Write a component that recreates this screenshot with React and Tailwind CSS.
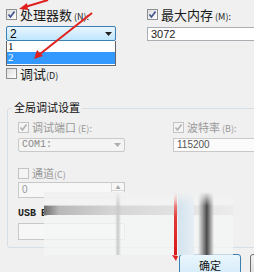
import React from "react";

const cjk = { fontFamily: '"Noto Sans CJK SC", "Liberation Sans", sans-serif' };

function Check({ checked, disabled }) {
  return (
    <span
      className={`flex items-center justify-center w-[11px] h-[11px] border shrink-0 ${
        disabled ? "border-[#c4c4c4] bg-[#f4f4f4]" : "border-[#8e8f8f] bg-[linear-gradient(135deg,#dcdcdc,#ffffff)]"
      }`}
    >
      {checked && (
        <svg width="9" height="9" viewBox="0 0 9 9">
          <path
            d="M1.5 4.5 L3.5 7 L7.5 1.5"
            fill="none"
            stroke={disabled ? "#b0b0b0" : "#3d4f8c"}
            strokeWidth="1.6"
          />
        </svg>
      )}
    </span>
  );
}

function Label({ checked, disabled, text, hint, big }) {
  return (
    <div className="flex items-center gap-[3px] h-[12px]">
      <Check checked={checked} disabled={disabled} />
      <span
        className={`leading-none whitespace-nowrap ${big ? "text-[13px]" : "text-[11px]"} ${
          disabled ? "text-[#9a9a9a]" : "text-[#1a1a1a]"
        }`}
        style={cjk}
      >
        {text}
        <span className="text-[9px]">{hint}</span>
      </span>
    </div>
  );
}

function Arrow({ color = "#222" }) {
  return (
    <svg width="7" height="4" viewBox="0 0 7 4">
      <path d="M0 0 H7 L3.5 4 Z" fill={color} />
    </svg>
  );
}

export default function App() {
  return (
    <div className="relative w-[254px] h-[272px] overflow-hidden bg-[#f0f0f0]" style={cjk}>
      {/* top part */}
      <div className="flex pt-[8px] pl-[6px] gap-[31px]">
        <div className="w-[110px]">
          <Label checked big text="处理器数" hint=" (N):" />
          <div className="mt-[6px] h-[15px] border border-[#3c7fb1] rounded-[2px] bg-[linear-gradient(#eaf6fd,#bee6fd)] flex items-center justify-between px-[3px]">
            <span className="text-[12px] leading-none" style={{ fontFamily: '"Liberation Sans", sans-serif' }}>2</span>
            <Arrow />
          </div>
          <div className="h-[25px] bg-white border border-[#646464] border-t-0 text-[11px] leading-[11px]" style={{ fontFamily: '"Liberation Serif", serif' }}>
            <div className="h-[11px] px-[1px]">1</div>
            <div className="h-[12px] px-[1px] bg-[#3399ff] text-white">2</div>
          </div>
          <div className="mt-[1px]">
            <Label text="调试" hint="(D)" big />
          </div>
        </div>
        <div className="flex-1">
          <Label checked big text="最大内存" hint=" (M):" />
          <div
            className="mt-[7px] h-[14px] bg-white border border-[#abadb3] border-r-0 text-[11px] leading-[12px] pl-[3px] text-[#222]"
            style={{ fontFamily: '"Liberation Sans", sans-serif' }}
          >
            3072
          </div>
        </div>
      </div>

      {/* group box */}
      <div className="relative ml-[7px] mt-[29px] w-[270px] border border-[#d5dfe5] rounded-[3px] pl-[10px] pt-[12px] pb-[7px]">
        <span className="absolute left-[4px] top-[-7px] px-[2px] bg-[#f0f0f0] text-[11px] leading-none text-[#111]">
          全局调试设置
        </span>
        <div className="flex">
          <div className="w-[155px]">
            <Label checked disabled text="调试端口" hint=" (E):" />
            <div className="mt-[5px] w-[107px] h-[14px] border border-[#c9c9c9] rounded-[2px] bg-[#f4f4f4] flex items-center justify-between px-[3px]">
              <span className="text-[10px] leading-none text-[#8a8a8a]" style={{ fontFamily: '"Liberation Mono", monospace' }}>COM1:</span>
              <Arrow color="#b0b0b0" />
            </div>
          </div>
          <div className="flex-1">
            <Label checked disabled text="波特率" hint=" (B):" />
            <div
              className="mt-[5px] h-[14px] bg-[#fbfbfb] border border-[#c9c9c9] border-r-0 text-[10px] leading-[12px] pl-[3px] text-[#555]"
              style={{ fontFamily: '"Liberation Sans", sans-serif' }}
            >
              115200
            </div>
          </div>
        </div>
        <div className="mt-[15px]">
          <Label disabled text="通道" hint="(C)" />
        </div>
        <div className="mt-[3px] w-[107px] h-[16px] border border-[#c9c9c9] bg-[#f7f7f7] flex">
          <span className="flex-1 text-[10px] leading-[14px] pl-[3px] text-[#999]" style={{ fontFamily: '"Liberation Sans", sans-serif' }}>0</span>
          <div className="w-[13px] flex flex-col border-l border-[#d8d8d8]">
            <div className="flex-1 flex items-center justify-center border-b border-[#d8d8d8] text-[5px] text-[#aaa] leading-none">▲</div>
            <div className="flex-1 flex items-center justify-center text-[5px] text-[#aaa] leading-none">▼</div>
          </div>
        </div>
        <div className="mt-[10px] h-[11px] flex items-center gap-[5px] text-[10px] leading-none font-bold text-[#222]" style={{ fontFamily: '"Liberation Mono", monospace' }}>
          <span>USB</span>
          <span>E</span>
        </div>
        <div className="mt-[4px] w-[107px] h-[17px] border border-[#c9c9c9] bg-[#f7f7f7]" />
      </div>

      {/* buttons */}
      <div className="flex gap-[9px] ml-[179px] mt-[6px]">
        <div className="w-[62px] h-[22px] shrink-0 border border-[#3c7fb1] rounded-[3px] bg-[linear-gradient(#eaf6fd,#d4ebf8)] flex justify-center pt-[5px] text-[11px] leading-none text-[#111]">
          确定
        </div>
        <div className="w-[62px] h-[22px] shrink-0 border border-[#707070] rounded-[3px] bg-[linear-gradient(#f2f2f2,#dddddd)]" />
      </div>

      {/* smeared patch over the lower area */}
      <div className="absolute left-[44px] top-[192px] w-[189px] h-[63px] bg-[#f4f5f6]/75">
        <div className="absolute left-0 top-[13px] w-full h-[10px] bg-[linear-gradient(90deg,#6e6e6e,#b9b9b9_8%,#d4d4d4_35%,#e2e2e2_70%,#ebebeb)]" />
        <div className="absolute left-0 top-[12px] w-full h-[2px] bg-[#f0f0f0]/60" />
        <div className="absolute left-[71px] top-0 w-[6px] h-full bg-[linear-gradient(90deg,transparent,#c9c9c9,transparent)]" />
        <div className="absolute left-[130px] top-0 w-[3px] h-full bg-[linear-gradient(#f3d0d0,#e23a3a_40%,#d81818)]" />
        <div className="absolute left-[134px] top-0 w-[16px] h-full bg-[linear-gradient(90deg,#d3e3ee,#e6eef4)]" />
        <div className="absolute left-[154px] top-0 w-[16px] h-full bg-[linear-gradient(90deg,transparent,#9a9a9a_30%,#4a4a4a_55%,#a6a6a6_80%,transparent)]" />
        <div className="absolute left-0 top-0 w-full h-[14px] bg-[linear-gradient(#f0f0f0,transparent)]" />
      </div>

      {/* red annotation arrows */}
      <svg className="absolute left-0 top-0" width="254" height="272" viewBox="0 0 254 272">
        <g stroke="#e0201c" strokeWidth="2" fill="#e0201c">
          <line x1="48" y1="0" x2="25" y2="7" />
          <path d="M19 9 L27 3 L28 10 Z" stroke="none" />
          <line x1="92" y1="13" x2="40" y2="54" />
          <path d="M34 59 L37 50 L43 56 Z" stroke="none" />
          <path d="M172 255 L178 256 L176 261 Z" stroke="none" />
        </g>
      </svg>
    </div>
  );
}
